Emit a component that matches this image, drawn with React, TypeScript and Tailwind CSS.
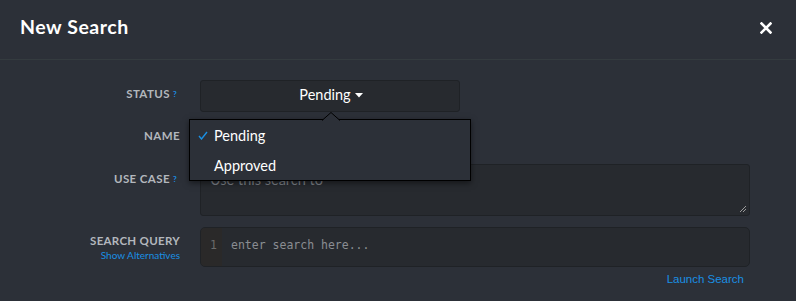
import React from "react";

const font = { fontFamily: "Lato, 'Open Sans', sans-serif" };

function Q() {
  return <sup className="ml-[3px] text-[8px] font-bold text-[#1a8fe3] relative -top-[1px]">?</sup>;
}

export default function App() {
  return (
    <div className="w-[796px] h-[301px] bg-[#2c3038] text-white overflow-hidden" style={font}>
      <div className="h-[60px] border-b border-[#343b3f] flex items-center justify-between pl-[20px] pr-[24px]">
        <h1 className="text-[19.5px] font-bold tracking-[0.55px] -mt-[5px]">New Search</h1>
        <svg width="12" height="12" viewBox="0 0 12 12" className="-mt-[3px]">
          <path d="M1.5 1.5 L10.5 10.5 M10.5 1.5 L1.5 10.5" stroke="white" strokeWidth="2.6" strokeLinecap="square" />
        </svg>
      </div>
      <div className="pt-[20px] flex flex-col gap-[10px]">
        {/* Status */}
        <div className="flex">
          <div className="w-[180px] shrink-0 text-right pt-[5px] pr-[3px] text-[11.5px] font-bold text-[#b3b7bd] tracking-[0.4px]">
            STATUS<Q />
          </div>
          <div className="ml-[20px] relative">
            <div className="w-[260px] h-[32px] rounded-[3px] bg-[#272a2f] border border-[#1f2226] flex items-center justify-center text-[14.5px] text-white pb-[2px] pl-[2px]">
              Pending
              <svg width="8" height="5" viewBox="0 0 8 5" className="ml-[4px]">
                <path d="M0 0 L8 0 L4 4.5 Z" fill="white" />
              </svg>
            </div>
            {/* Dropdown menu */}
            <div className="absolute z-10 left-[-11px] top-[39px] w-[282px] h-[62px] bg-[#2c3038] border border-black shadow-[0_2px_6px_rgba(0,0,0,0.5)] flex flex-col">
              <svg width="18" height="9" viewBox="0 0 18 9" className="absolute left-[132px] top-[-8px]">
                <path d="M0 8.5 L9 0.5 L18 8.5" fill="#2c3038" stroke="black" strokeWidth="1" />
              </svg>
              <div className="h-[30px] flex items-center text-[14.5px] text-white pt-[1px]">
                <svg width="10" height="9" viewBox="0 0 10 9" className="ml-[8px] mr-[6px]">
                  <path d="M1 5 L3.5 8 L9 1" stroke="#1a8fe3" strokeWidth="1.4" fill="none" />
                </svg>
                Pending
              </div>
              <div className="h-[30px] flex items-center text-[14.5px] text-white pl-[24px] pt-[1px]">Approved</div>
            </div>
          </div>
        </div>
        {/* Name */}
        <div className="flex h-[32px]">
          <div className="w-[180px] shrink-0 text-right pt-[5px] text-[11.5px] font-bold text-[#b3b7bd] tracking-[0.4px]">
            NAME
          </div>
        </div>
        {/* Use Case */}
        <div className="flex">
          <div className="w-[180px] shrink-0 text-right pt-[6px] pr-[3px] text-[11.5px] font-bold text-[#b3b7bd] tracking-[0.4px]">
            USE CASE<Q />
          </div>
          <div className="ml-[20px] w-[550px] h-[52px] rounded-[3px] bg-[#272a2f] border border-[#1f2226] relative px-[9px] pt-[4px] text-[14.5px] text-[#7d8188]">
            Use this search to
            <svg width="8" height="8" viewBox="0 0 8 8" className="absolute right-[2px] bottom-[2px]">
              <path d="M7 1 L1 7 M7 4 L4 7" stroke="#9a9a9a" strokeWidth="1" />
            </svg>
          </div>
        </div>
        {/* Search Query */}
        <div className="flex mt-[1px]">
          <div className="w-[180px] shrink-0 text-right pt-[7px] flex flex-col items-end">
            <div className="text-[11.5px] font-bold text-[#b3b7bd] tracking-[0.3px] leading-[13px]">SEARCH QUERY</div>
            <div className="text-[10px] text-[#1a8fe3] leading-[13px] mt-[2px]">Show Alternatives</div>
          </div>
          <div className="ml-[20px] w-[550px] flex flex-col">
            <div className="h-[40px] rounded-[5px] bg-[#272a2f] border border-[#1f2226] flex overflow-hidden">
              <div className="w-[21px] bg-[#2a2929] text-right pr-[5px] pt-[10px] text-[11.5px] text-[#6b6b6b] leading-[15px]" style={{ fontFamily: "'DejaVu Sans Mono', monospace" }}>1</div>
              <div className="pl-[9px] pt-[10px] text-[11.5px] text-[#8a8d92] leading-[15px]" style={{ fontFamily: "'DejaVu Sans Mono', monospace" }}>
                enter search here...
              </div>
            </div>
            <div className="flex justify-end pr-[6px] mt-[4px] text-[11.5px] leading-[16px] text-[#1a8fe3]" style={{ fontFamily: "'Liberation Sans', sans-serif" }}>
              Launch Search
            </div>
          </div>
        </div>
      </div>
    </div>
  );
}
